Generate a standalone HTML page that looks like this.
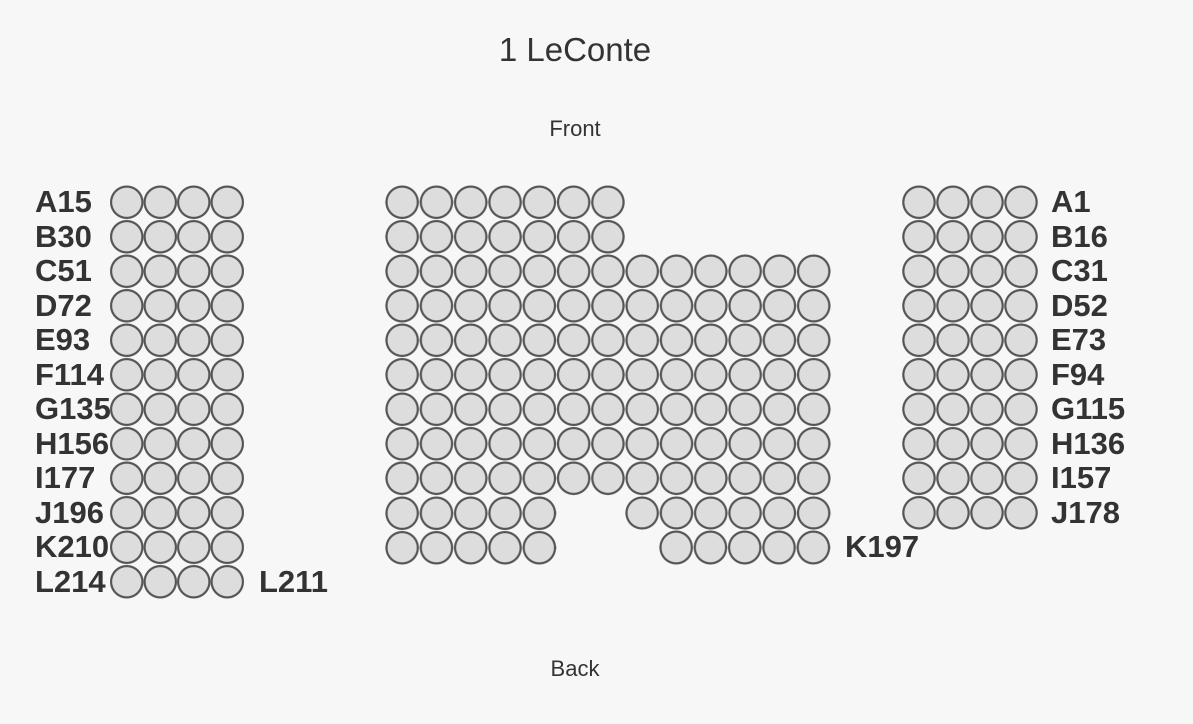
<!DOCTYPE html>
<html><head><style>
body{margin:0;width:1193px;height:724px;background:#f7f7f7;font-family:"Liberation Sans",sans-serif;color:#333;position:relative;overflow:hidden}
.t{position:absolute;left:0;width:1150px;text-align:center}
.s{position:absolute;background:radial-gradient(circle at center,#ddd 0 14.2px,#555 14.9px 16.4px,transparent 17.1px);background-size:34.3px 34.5px}
.l{position:absolute;font-weight:bold;font-size:31px;line-height:34.5px;height:34.5px}
</style></head><body>
<div class="t" style="top:31px;font-size:33px">1 LeConte</div>
<div class="t" style="top:116px;font-size:22px">Front</div>
<div class="t" style="top:656px;font-size:22px">Back</div>

<div class="s" style="left:110px;top:185px;width:134px;height:414px;background-size:33.5px 34.5px"></div>
<div class="s" style="left:902px;top:185px;width:136px;height:345px;background-size:34px 34.5px"></div>
<div class="s" style="left:385px;top:185px;width:240.1px;height:69px"></div>
<div class="s" style="left:385px;top:254px;width:445.9px;height:241.5px"></div>
<div class="s" style="left:385px;top:495.5px;width:171.5px;height:69px"></div>
<div class="s" style="left:625.1px;top:495.5px;width:205.8px;height:34.5px"></div>
<div class="s" style="left:659.4px;top:530px;width:171.5px;height:34.5px"></div>

<div class="l" style="left:35px;top:185px">A15<br>B30<br>C51<br>D72<br>E93<br>F114<br>G135<br>H156<br>I177<br>J196<br>K210<br>L214</div>
<div class="l" style="left:1051px;top:185px">A1<br>B16<br>C31<br>D52<br>E73<br>F94<br>G115<br>H136<br>I157<br>J178</div>
<div class="l" style="left:845px;top:530px">K197</div>
<div class="l" style="left:259px;top:564.5px">L211</div>
</body></html>
